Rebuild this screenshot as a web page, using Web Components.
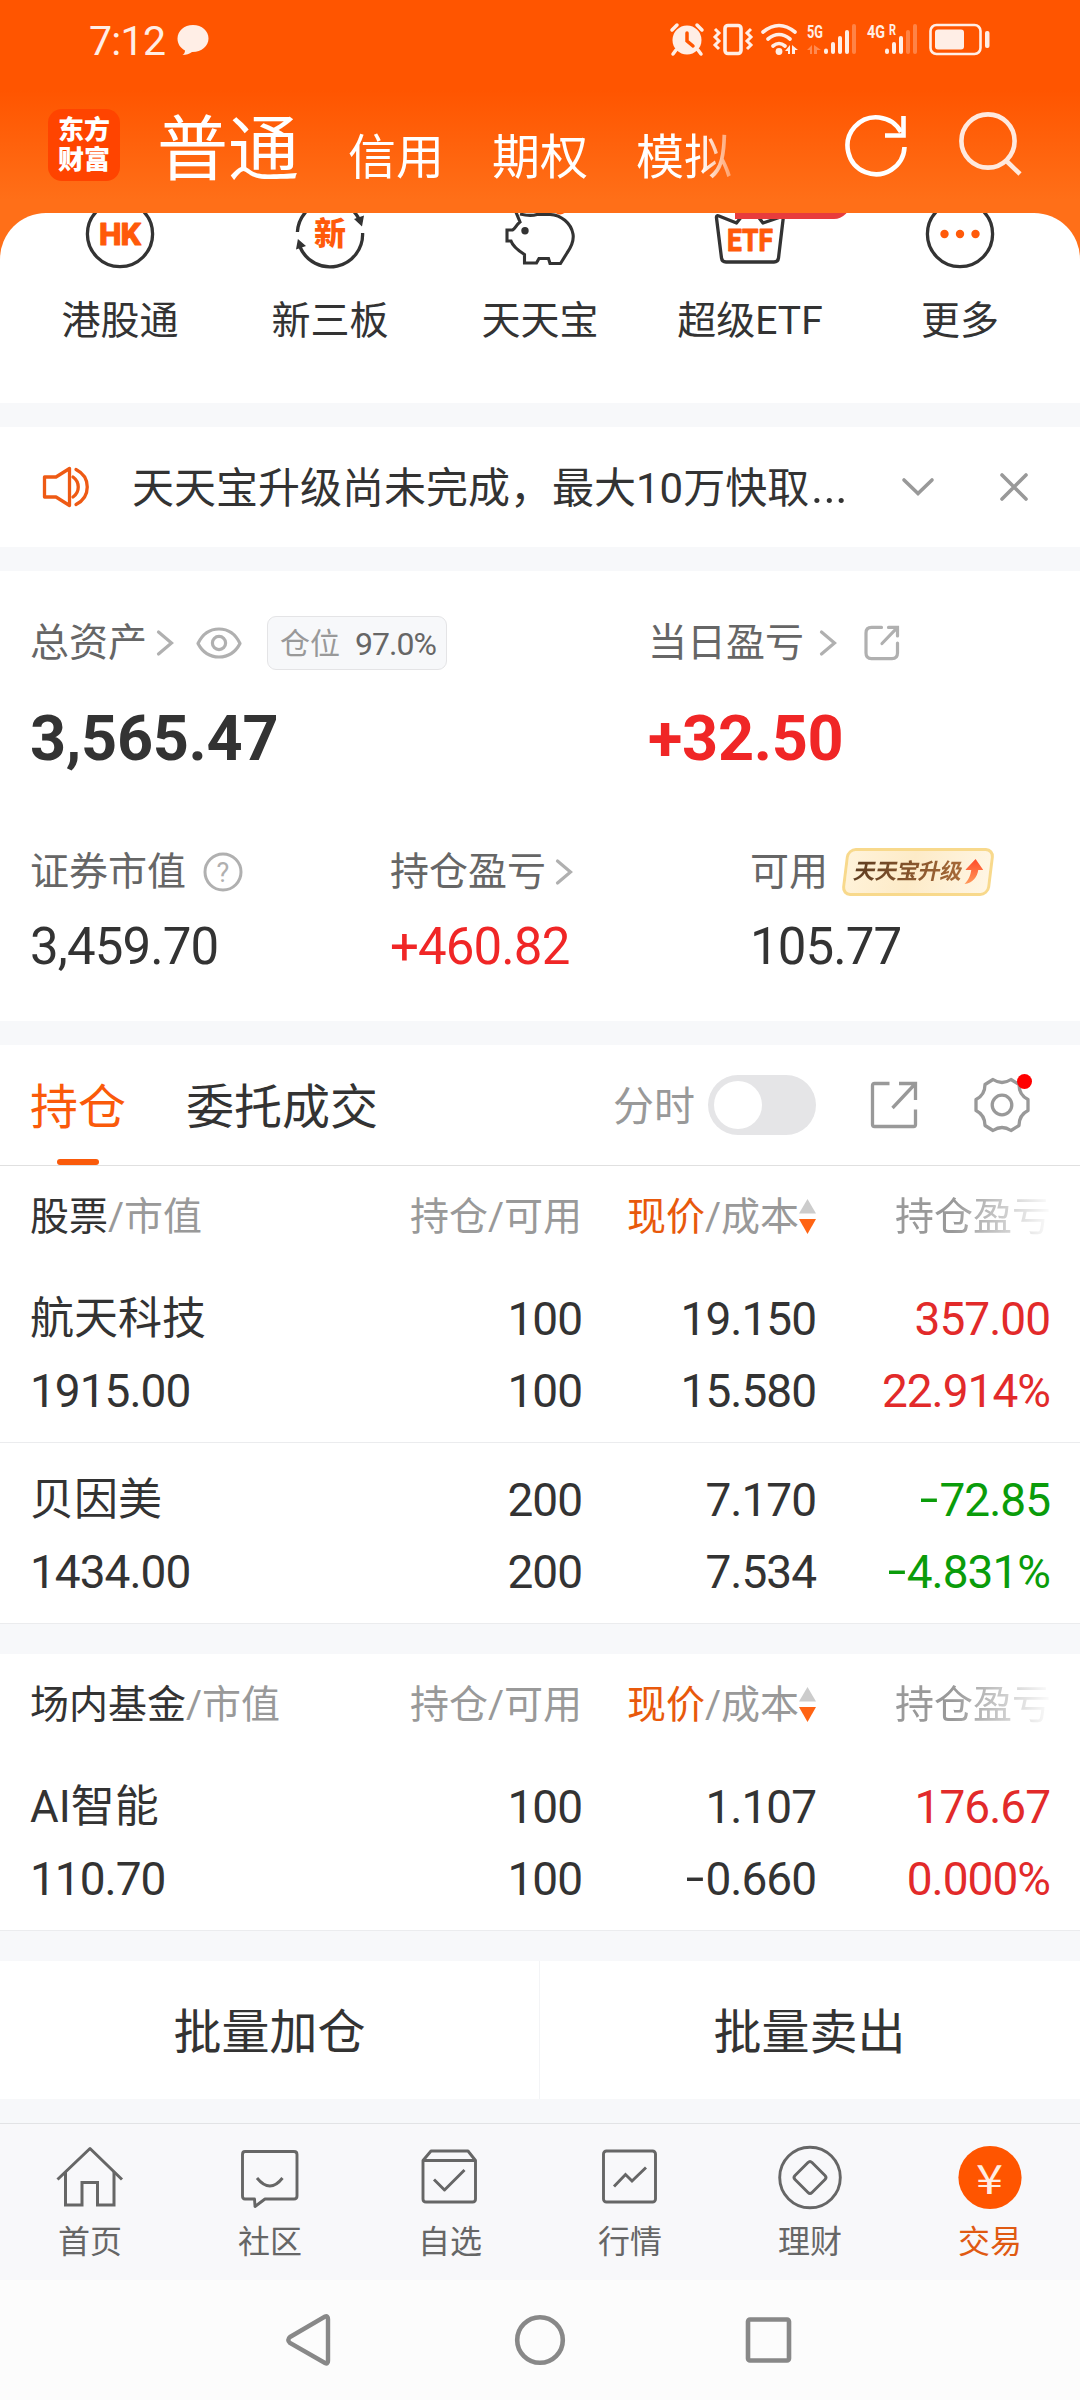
<!DOCTYPE html>
<html lang="zh-CN">
<head>
<meta charset="utf-8">
<title>交易</title>
<style>
  body {
    margin: 0;
    width: 1080px;
    background: #f7f8fa;
    color: #333;
    font-family: Roboto, "Noto Sans CJK SC", sans-serif;
  }
</style>
</head>
<body>
<trade-app></trade-app>

<script>
const icons = {
  refresh: { w: 66, h: 66, svg: `
    <g fill="none" stroke="#fff" stroke-width="4.600">
      <path d="M60.500 35A28.500 28.500 0 1 1 57 20"/>
      <path d="M59.500 4V23.500H41"/>
    </g>` },
  search: { w: 66, h: 66, svg: `
    <g fill="none" stroke="#ffe9de" stroke-width="4.600">
      <circle cx="30" cy="29" r="26.600"/><path d="M48.500 49L62 62"/>
    </g>` },
  hk: { w: 72, h: 72, svg: `
    <circle cx="36" cy="36" r="32.600" fill="none" stroke="#333" stroke-width="3.300"/>
    <text x="36" y="47" font-size="32" font-weight="800" fill="#ff5a0a" stroke="#ff5a0a" stroke-width="1" stroke-linejoin="round" text-anchor="middle" textLength="42">HK</text>` },
  xin: { w: 72, h: 72, svg: `
    <g fill="none" stroke="#333" stroke-width="3.300">
      <path d="M3.400 34A32.600 32.600 0 0 1 65 21"/>
      <path d="M68.600 35A32.600 32.600 0 0 1 6 49"/>
    </g>
    <path d="M60 21L70 17.500L68 28.500ZM2 51.500L3.900 41L12 48Z" fill="#333"/>
    <text x="36" y="47" font-size="32" font-weight="900" fill="#ff5a0a" text-anchor="middle">新</text>` },
  pig: { w: 72, h: 72, svg: `
    <circle cx="56" cy="9" r="7.500" fill="#ff5a0a"/>
    <path d="M11.500 13L16 24C12 27 11 31 8.500 32H3V43H7C9 49 15 53 20.500 56.500V65H32.500L35 60.500H44.500L46 65.500H56.500L63 55C68 48 70 42 69 36C67 25 57 17 46 16.500H33C28 18 20 17 16 16" fill="#fff" stroke="#333" stroke-width="3.100"/>
    <circle cx="21" cy="32.700" r="3.700" fill="#333"/>` },
  etf: { w: 72, h: 72, svg: `
    <path d="M2.500 20L7.500 60Q8 64 12 64H60Q64 64 64.500 60L69.500 18L49 25L36 8L22.500 25L5 18Q2 17 2.500 20Z" fill="none" stroke="#333" stroke-width="3.300" stroke-linejoin="round"/>
    <text x="36" y="53" font-size="32" font-weight="800" fill="#ff5a0a" stroke="#ff5a0a" stroke-width=".8" stroke-linejoin="round" text-anchor="middle" textLength="46" lengthAdjust="spacingAndGlyphs">ETF</text>` },
  more: { w: 72, h: 72, svg: `
    <circle cx="36" cy="36" r="32.600" fill="none" stroke="#333" stroke-width="3.300"/>
    <g fill="#ff5a0a"><circle cx="20.500" cy="36" r="4.200"/><circle cx="36" cy="36" r="4.200"/><circle cx="51.500" cy="36" r="4.200"/></g>` },
  speaker: { w: 48, h: 44, svg: `
    <g fill="none" stroke="#ee5a14" stroke-width="3.300" stroke-linejoin="round" stroke-linecap="round">
      <path d="M2.500 12H14L27.500 3.500V40.500L14 32H2.500Z"/>
      <path d="M31 12C38 17 38 27 31 32M34 4.500C49 12 49 32 34 39.500"/>
    </g>` },
  down: { w: 34, h: 22, svg: `<path d="M3 4L17 17.500L31 4" fill="none" stroke="#999" stroke-width="3.600" stroke-linecap="round"/>` },
  close: { w: 30, h: 30, svg: `<path d="M3 3L27 27M27 3L3 27" fill="none" stroke="#999" stroke-width="3.600" stroke-linecap="round"/>` },
  right: { w: 18, h: 28, svg: `<path d="M2.500 3L15.500 14L2.500 25" fill="none" stroke="#b0b0b0" stroke-width="3.200" stroke-linecap="round"/>` },
  eye: { w: 46, h: 32, svg: `
    <g fill="none" stroke="#b0b0b0" stroke-width="3.200">
      <path d="M2 16.500C7 6 14 2 23 2S39 6 44 16.500C39 26 32 30 23 30S7 26 2 16.500Z" stroke-linejoin="round"/>
      <circle cx="23" cy="16" r="6.600"/>
    </g>` },
  share: { w: 36, h: 36, svg: `
    <g fill="none" stroke="#b0b0b0" stroke-width="3.200" stroke-linecap="round">
      <path d="M17.500 2.400H7.500Q2 2.400 2 8V28Q2 33.600 7.500 33.600H28Q33.500 33.600 33.500 28V18"/>
      <path d="M24.500 2.400H33.500V11M33.500 2.400L18 18.500"/>
    </g>` },
  shareBig: { w: 48, h: 48, svg: `
    <g fill="none" stroke="#999" stroke-width="3.300">
      <path d="M19.500 2.500H4.500Q2.500 2.500 2.500 4.500V43.500Q2.500 45.500 4.500 45.500H43.500Q45.500 45.500 45.500 43.500V28.500"/>
      <path d="M29 2.500H45.500V19M45.500 2.500L22.500 27"/>
    </g>` },
  help: { w: 40, h: 40, svg: `
    <circle cx="20" cy="20" r="18" fill="none" stroke="#b0b0b0" stroke-width="3"/>
    <text x="20" y="29.500" font-size="27" fill="#b0b0b0" text-anchor="middle">?</text>` },
  gear: { w: 56, h: 56, svg: `
    <g fill="none" stroke="#999" stroke-width="3.300" stroke-linejoin="round">
      <path d="M19 2.500Q28 8.500 37 2.500L45 7.500Q45 18 54 22.500V33.500Q45 38 45 48.500L37 53.500Q28 47.500 19 53.500L11 48.500Q11 38 2 33.500V22.500Q11 18 11 7.500Z"/>
      <circle cx="28" cy="28" r="9.800"/>
    </g>` },
  sort: { w: 17, h: 36, svg: `<path d="M8.500 0L17 14.500H0Z" fill="#ccc"/><path d="M0 20H17L8.500 35Z" fill="#ff6414"/>` },
  home: { w: 72, h: 72, svg: `
    <g fill="none" stroke="#666" stroke-width="3">
      <path d="M3.500 38.500L36 7.500L68 38.500" stroke-linejoin="round"/>
      <path d="M11.500 31V64H28V41.500H43.500V64H60V31"/>
    </g>` },
  chat: { w: 72, h: 72, svg: `
    <g fill="none" stroke="#666" stroke-width="2.900" stroke-linejoin="round">
      <path d="M11 10.500H60Q63 10.500 63 13.500V55Q63 58 60 58H31L21 65.500L20.500 58H11Q8.500 58 8.500 55V13.500Q8.500 10.500 11 10.500Z"/>
      <path d="M23 37Q36 53 48.500 37"/>
    </g>` },
  check: { w: 72, h: 72, svg: `
    <g fill="none" stroke="#666" stroke-width="2.900" stroke-linejoin="round">
      <path d="M9 19.500L17 10H54L61.500 19.500V58Q61.500 61 58.500 61H12Q9 61 9 58ZM9 19.500H61.500"/>
      <path d="M20 38.500L30.500 49L50.500 29"/>
    </g>` },
  chart: { w: 72, h: 72, svg: `
    <g fill="none" stroke="#666" stroke-width="2.900">
      <rect x="9.500" y="10" width="52" height="51" rx="3"/><path d="M20 45.500L31.500 33.500L38 40L52 26.500"/>
    </g>` },
  money: { w: 72, h: 72, svg: `
    <g fill="none" stroke="#666" stroke-width="2.900">
      <circle cx="36" cy="36.500" r="30.300"/>
      <path d="M34 21.500Q36 19.500 38 21.500L51 34.500Q53 36.500 51 38.500L38 51.500Q36 53.500 34 51.500L21 38.500Q19 36.500 21 34.500Z"/>
    </g>` },
  trade: { w: 72, h: 72, svg: `
    <circle cx="36" cy="36.500" r="31.600" fill="#ff5500"/>
    <text x="35.500" y="53" font-size="41" font-family="Noto Sans CJK SC" fill="#ffeee4" text-anchor="middle" textLength="27" lengthAdjust="spacingAndGlyphs">¥</text>` },
  back: { w: 56, h: 56, svg: `<path d="M7 25L42 4.500Q45 3.500 45 7V49Q45 52.500 42 51L7 31Q3.500 28 7 25Z" fill="none" stroke="#888" stroke-width="4.400"/>` },
  circle: { w: 56, h: 56, svg: `<circle cx="28" cy="28" r="22.800" fill="none" stroke="#888" stroke-width="4.600"/>` },
  square: { w: 56, h: 56, svg: `<rect x="7" y="7.500" width="41" height="41" rx="2" fill="none" stroke="#888" stroke-width="4.600"/>` },
  bubble: { w: 32, h: 32, svg: `<path d="M16 1C7 1 .5 7 .5 14.500C.5 20 3.500 24 8 26.500C8 28.500 7 30 5.500 31C9 31 12.500 30 15 28C24.500 28.200 31.500 22 31.500 14.500S25 1 16 1Z" fill="#ffeee6"/>` },
  // alarm, vibrate, wifi, two SIM signals and battery share one strip
  system: { w: 326, h: 40, svg: `
    <g fill="#ffeee6">
      <circle cx="19" cy="20" r="14.500"/>
      <path d="M8 30L5 34M30 30L33 34M4 10L9 5M34 10L29 5" stroke="#ffeee6" stroke-width="3.500" stroke-linecap="round"/>
      <path d="M19 13V21L25 26" fill="none" stroke="#ff5500" stroke-width="3.500" stroke-linecap="round"/>
      <rect x="57" y="5.500" width="16" height="28" rx="3" fill="none" stroke="#ffeee6" stroke-width="3.600"/>
      <path d="M47 9L51 13L47 17L51 21L47 25L51 29M83 9L79 13L83 17L79 21L83 25L79 29" fill="none" stroke="#ffeee6" stroke-width="3"/>
      <path d="M95 12Q111 -1 127 12M100 19Q111 10 122 19M105 26Q111 21 117 26" fill="none" stroke="#ffeee6" stroke-width="3.600" stroke-linecap="round"/>
      <circle cx="111" cy="31.500" r="3.400"/>
      <path d="M117 31L122 25V34H120V31ZM124 25L130 30H127V34H124Z"/>
      <text x="139" y="17.500" font-size="18" font-weight="700" textLength="16" lengthAdjust="spacingAndGlyphs">5G</text>
      <path d="M139 30L144 25V34H142V30ZM146 25L153 30H149V34H146Z" opacity=".35"/>
      <rect x="156" y="28.500" width="4" height="5.500" rx="2"/>
      <rect x="163" y="22" width="4" height="12" rx="2"/>
      <rect x="170" y="16" width="4" height="18" rx="2"/>
      <rect x="177" y="10" width="4" height="24" rx="2"/>
      <rect x="184" y="4" width="4" height="30" rx="2" opacity=".3"/>
      <text x="199" y="17.500" font-size="18" font-weight="700" textLength="18" lengthAdjust="spacingAndGlyphs">4G</text>
      <text x="221" y="14.500" font-size="15" font-weight="700" textLength="7" lengthAdjust="spacingAndGlyphs">R</text>
      <rect x="217" y="28.500" width="4" height="5.500" rx="2"/>
      <rect x="224" y="22" width="4" height="12" rx="2"/>
      <rect x="231" y="16" width="4" height="18" rx="2"/>
      <rect x="238" y="10" width="4" height="24" rx="2" opacity=".3"/>
      <rect x="245" y="4" width="4" height="30" rx="2" opacity=".3"/>
      <rect x="262.500" y="5" width="50" height="29" rx="6" fill="none" stroke="#ffeee6" stroke-width="2.600"/>
      <rect x="267" y="9.500" width="29" height="20" rx="3"/>
      <rect x="317" y="11" width="4.500" height="17" rx="2"/>
    </g>` },
};

class UiIcon extends HTMLElement {
  constructor() {
    super();
    this.attachShadow({ mode: 'open' });
  }

  connectedCallback() {
    const icon = icons[this.getAttribute('name')];
    this.shadowRoot.innerHTML = `
      <style>
        :host { display: block; flex: none; width: ${icon.w}px; height: ${icon.h}px; }
        svg { display: block; }
      </style>
      <svg width="${icon.w}" height="${icon.h}" viewBox="0 0 ${icon.w} ${icon.h}">${icon.svg}</svg>`;
  }
}
customElements.define('ui-icon', UiIcon);

// Registers an element whose shadow root is cloned from static markup.
function defineView(tag, html) {
  const template = document.createElement('template');
  template.innerHTML = html;
  customElements.define(tag, class extends HTMLElement {
    constructor() {
      super();
      this.attachShadow({ mode: 'open' }).appendChild(template.content.cloneNode(true));
    }
  });
}

defineView('status-bar', `
<style>
  :host { display: flex; align-items: center; height: 80px; padding: 0 86px 0 89px; box-sizing: border-box; color: #ffeee6; }
  .time { font-size: 41px; line-height: 80px; letter-spacing: -.7px; margin-right: 12px; padding-top: 1px; }
  .system { margin-left: auto; }
</style>
<span class="time">7:12</span>
<ui-icon name="bubble"></ui-icon>
<ui-icon class="system" name="system"></ui-icon>
`);

defineView('app-header', `
<style>
  :host { display: block; height: 213px; background: linear-gradient(#ff5500 0, #ff5500 90px, #ff6f18 200px); color: #fff; }
  .bar { display: flex; align-items: center; height: 130px; padding: 0 56px 0 48px; }
  .logo { width: 72px; height: 72px; border-radius: 14px; background: #ff4400; display: flex; flex-direction: column; align-items: center; justify-content: center; font-size: 26px; line-height: 30px; font-weight: 900; }
  .modes { display: flex; align-items: baseline; gap: 48px; width: 586px; margin-left: 37px; padding-top: 17px; font-size: 48px; line-height: 90px; -webkit-mask-image: linear-gradient(90deg, #000 544px, transparent 592px); mask-image: linear-gradient(90deg, #000 544px, transparent 592px); }
  .modes b { font-size: 71px; font-weight: 400; margin-right: 1px; }
  .tools { display: flex; gap: 48px; margin-left: auto; }
</style>
<status-bar></status-bar>
<div class="bar">
  <div class="logo"><span>东方</span><span>财富</span></div>
  <div class="modes"><b>普通</b><span>信用</span><span>期权</span><span>模拟</span></div>
  <div class="tools"><ui-icon name="refresh"></ui-icon><ui-icon name="search"></ui-icon></div>
</div>
`);

class QuickEntry extends HTMLElement {
  constructor() {
    super();
    this.attachShadow({ mode: 'open' });
  }

  connectedCallback() {
    this.shadowRoot.innerHTML = `
      <style>
        :host { display: flex; flex-direction: column; align-items: center; position: relative; }
        ui-icon { margin-top: -15px; }
        .label { font-size: 39px; line-height: 60px; margin-top: 21px; }
        .badge { position: absolute; top: -24px; left: 90px; width: 115px; height: 30px; border-radius: 14px 14px 16px 0; background: #e83c3c; }
      </style>
      <ui-icon name="${this.getAttribute('icon')}"></ui-icon>
      ${this.hasAttribute('badge') ? '<i class="badge"></i>' : ''}
      <span class="label"><slot></slot></span>`;
  }
}
customElements.define('quick-entry', QuickEntry);

defineView('quick-entries', `
<style>
  :host { display: block; height: 190px; background: #ff6f18; }
  .sheet { display: grid; grid-template-columns: repeat(5, 210px); height: 190px; padding: 0 15px; border-radius: 46px 46px 0 0; background: #fff; overflow: hidden; }
</style>
<div class="sheet">
  <quick-entry icon="hk">港股通</quick-entry>
  <quick-entry icon="xin">新三板</quick-entry>
  <quick-entry icon="pig">天天宝</quick-entry>
  <quick-entry icon="etf" badge>超级ETF</quick-entry>
  <quick-entry icon="more">更多</quick-entry>
</div>
`);

defineView('notice-bar', `
<style>
  :host { display: flex; align-items: center; height: 120px; padding: 0 51px 0 42px; background: #fff; }
  .text { flex: 1; margin-left: 42px; font-size: 42px; line-height: 60px; padding-top: 4px; white-space: nowrap; }
  .dots { font-size: 62px; line-height: 1px; font-weight: 300; }
  .close { margin-left: 64px; }
</style>
<ui-icon name="speaker"></ui-icon>
<span class="text"><slot></slot><span class="dots">…</span></span>
<ui-icon name="down"></ui-icon>
<ui-icon class="close" name="close"></ui-icon>
`);

defineView('upgrade-tag', `
<style>
  :host { display: block; width: 148px; height: 48px; margin-left: 16px; }
  .box { display: flex; align-items: center; box-sizing: border-box; height: 48px; border: 3px solid #f8d98c; border-radius: 9px; background: linear-gradient(100deg, #fff3da, #fdebc8 45%, #fff6e4); transform: skewX(-7deg); padding-left: 7px; }
  .text { font-size: 22px; line-height: 42px; font-weight: 700; letter-spacing: -.4px; transform: skewX(-5deg); background: linear-gradient(90deg, #5f3d20, #a86a38); -webkit-background-clip: text; background-clip: text; color: transparent; }
  svg { margin-left: 3px; }
</style>
<div class="box">
  <span class="text"><slot></slot></span>
  <svg width="18" height="26" viewBox="0 0 18 26">
    <defs><linearGradient id="g" x2="0" y2="1"><stop stop-color="#ff4a2a"/><stop offset="1" stop-color="#ff9a5a"/></linearGradient></defs>
    <path d="M9 0L18 11H13C13 18 9 24 1 25C5 20 6 16 6 11H0Z" fill="url(#g)"/>
  </svg>
</div>
`);

defineView('asset-panel', `
<style>
  :host { display: block; height: 450px; box-sizing: border-box; padding: 42px 0 0 30px; background: #fff; }
  .total { display: grid; grid-template-columns: 618px 1fr; }
  .detail { display: grid; grid-template-columns: 360px 360px 1fr; margin-top: 63px; }
  .label { display: flex; align-items: center; height: 60px; font-size: 39px; line-height: 60px; color: #666; }
  .sum { font-size: 63px; line-height: 80px; font-weight: 700; margin-top: 26px; letter-spacing: -.3px; }
  .value { font-size: 51px; line-height: 60px; margin-top: 15px; letter-spacing: -.9px; }
  .up { color: #f02626; }
  .chip { display: flex; gap: 15px; box-sizing: border-box; width: 180px; height: 54px; margin-left: 25px; padding: 0 0 0 12px; border: 1px solid #e4e4e6; border-radius: 9px; background: #f7f8fa; font-size: 30px; line-height: 54px; color: #999; }
  .chip b { font-weight: 400; font-size: 32px; letter-spacing: -1px; color: #666; }
</style>
<div class="total">
  <div>
    <div class="label">总资产<ui-icon name="right" style="margin-left:9px"></ui-icon><ui-icon name="eye" style="margin-left:22px"></ui-icon>
      <span class="chip"><span>仓位</span><b>97.0%</b></span></div>
    <div class="sum">3,565.47</div>
  </div>
  <div>
    <div class="label">当日盈亏<ui-icon name="right" style="margin-left:15px"></ui-icon><ui-icon name="share" style="margin-left:27px"></ui-icon></div>
    <div class="sum up">+32.50</div>
  </div>
</div>
<div class="detail">
  <div>
    <div class="label">证券市值<ui-icon name="help" style="margin-left:17px"></ui-icon></div>
    <div class="value">3,459.70</div>
  </div>
  <div>
    <div class="label">持仓盈亏<ui-icon name="right" style="margin-left:9px"></ui-icon></div>
    <div class="value up">+460.82</div>
  </div>
  <div>
    <div class="label">可用<upgrade-tag>天天宝升级</upgrade-tag></div>
    <div class="value">105.77</div>
  </div>
</div>
`);

defineView('holding-tabs', `
<style>
  :host { display: flex; align-items: center; height: 120px; padding: 0 50px 0 30px; background: #fff; border-bottom: 1px solid #e0e0e0; }
  .tab { position: relative; font-size: 48px; line-height: 120px; margin-right: 60px; padding-top: 3px; height: 117px; }
  .active { color: #fa5a0a; }
  .active::after { content: ""; position: absolute; left: 27px; bottom: 0; width: 42px; height: 6px; border-radius: 3px; background: #fa5a0a; }
  .chart { margin-left: auto; font-size: 41px; line-height: 60px; padding-top: 3px; color: #999; }
  .toggle { box-sizing: border-box; width: 108px; height: 60px; margin: 0 54px 0 13px; padding: 6px; border-radius: 30px; background: #e5e5e7; }
  .toggle i { display: block; width: 48px; height: 48px; border-radius: 50%; background: #fff; }
  .settings { position: relative; margin-left: 56px; }
  .settings i { position: absolute; left: 43px; top: -3px; width: 15px; height: 15px; border-radius: 50%; background: #f00; }
</style>
<span class="tab active">持仓</span>
<span class="tab">委托成交</span>
<span class="chart">分时</span>
<span class="toggle"><i></i></span>
<ui-icon name="shareBig"></ui-icon>
<span class="settings"><ui-icon name="gear"></ui-icon><i></i></span>
`);

defineView('holding-head', `
<style>
  :host { display: grid; grid-template-columns: 319px 234px 234px 234px; height: 96px; padding: 0 31px 0 30px; background: #fff; font-size: 39px; line-height: 102px; color: #999; white-space: nowrap; }
  .kind { color: #333; }
  .right { text-align: right; margin-right: 1px; }
  .price { display: flex; justify-content: flex-end; }
  .price b { font-weight: 400; color: #e8590c; }
  .price ui-icon { margin: 33px 1px 0 0; }
  .profit { text-align: right; -webkit-mask-image: linear-gradient(90deg, #000 58%, transparent 101%); mask-image: linear-gradient(90deg, #000 58%, transparent 101%); }
</style>
<span><span class="kind"><slot></slot></span>/市值</span>
<span class="right">持仓/可用</span>
<span class="price"><span><b>现价</b>/成本</span><ui-icon name="sort"></ui-icon></span>
<span class="profit">持仓盈亏</span>
`);

class HoldingRow extends HTMLElement {
  constructor() {
    super();
    this.attachShadow({ mode: 'open' });
  }

  // the sign is drawn wider and a little higher than the font's hyphen
  number(name) {
    return this.getAttribute(name).replace('-', '<span class="minus">-</span>');
  }

  connectedCallback() {
    const color = this.getAttribute('trend') === 'down' ? '#0a9c0a' : '#e22a2a';
    this.shadowRoot.innerHTML = `
      <style>
        :host { display: grid; grid-template-columns: 318px 234px 234px 234px; grid-template-rows: 72px 72px; height: 159px; padding: 21px 32px 0 30px; background: #fff; border-bottom: 1px solid #ebecee; font-size: 46px; line-height: 73px; letter-spacing: -1px; }
        .name { font-size: 44px; letter-spacing: 0; }
        .num { text-align: right; }
        .profit { text-align: right; color: ${color}; }
        .minus { display: inline-block; width: 20px; text-align: center; letter-spacing: 0; transform: translateY(-2px) scaleX(1.45); line-height: 1; }
      </style>
      <span class="name">${this.getAttribute('name')}</span>
      <span class="num">${this.number('held')}</span>
      <span class="num">${this.number('price')}</span>
      <span class="profit">${this.number('profit')}</span>
      <span>${this.number('value')}</span>
      <span class="num">${this.number('usable')}</span>
      <span class="num">${this.number('cost')}</span>
      <span class="profit">${this.number('rate')}</span>`;
  }
}
customElements.define('holding-row', HoldingRow);

defineView('batch-actions', `
<style>
  :host { display: flex; height: 138px; background: #fff; font-size: 48px; line-height: 144px; }
  span { width: 539px; text-align: center; }
  i { width: 1px; height: 138px; background: #f3f4f6; }
</style>
<span>批量加仓</span><i></i><span>批量卖出</span>
`);

class TabItem extends HTMLElement {
  constructor() {
    super();
    this.attachShadow({ mode: 'open' });
  }

  connectedCallback() {
    this.shadowRoot.innerHTML = `
      <style>
        :host { display: flex; flex: 1; flex-direction: column; align-items: center; font-size: 32px; line-height: 48px; color: #666; }
        :host([active]) { color: #e05a12; }
        .label { margin-top: 5px; }
      </style>
      <ui-icon name="${this.getAttribute('icon')}"></ui-icon>
      <span class="label"><slot></slot></span>`;
  }
}
customElements.define('tab-item', TabItem);

defineView('tab-bar', `
<style>
  :host { display: flex; box-sizing: border-box; height: 157px; padding-top: 17px; border-top: 1px solid #e2e3e5; background: #f8f8fa; }
</style>
<tab-item icon="home">首页</tab-item>
<tab-item icon="chat">社区</tab-item>
<tab-item icon="check">自选</tab-item>
<tab-item icon="chart">行情</tab-item>
<tab-item icon="money">理财</tab-item>
<tab-item icon="trade" active>交易</tab-item>
`);

defineView('system-nav', `
<style>
  :host { display: flex; align-items: center; justify-content: center; gap: 173px; height: 120px; background: #fcfcfc; }
</style>
<ui-icon name="back"></ui-icon><ui-icon name="circle"></ui-icon><ui-icon name="square"></ui-icon>
`);

defineView('trade-app', `
<style>
  :host { display: flex; flex-direction: column; width: 1080px; height: 2400px; background: #f7f8fa; overflow: hidden; }
  notice-bar, asset-panel, holding-tabs, tab-bar { margin-top: 24px; }
  .funds, batch-actions { margin-top: 30px; }
</style>
<app-header></app-header>
<quick-entries></quick-entries>
<notice-bar>天天宝升级尚未完成，最大10万快取</notice-bar>
<asset-panel></asset-panel>
<holding-tabs></holding-tabs>
<holding-head>股票</holding-head>
<holding-row name="航天科技" value="1915.00" held="100" usable="100" price="19.150" cost="15.580" profit="357.00" rate="22.914%"></holding-row>
<holding-row name="贝因美" value="1434.00" held="200" usable="200" price="7.170" cost="7.534" profit="-72.85" rate="-4.831%" trend="down"></holding-row>
<holding-head class="funds">场内基金</holding-head>
<holding-row name="AI智能" value="110.70" held="100" usable="100" price="1.107" cost="-0.660" profit="176.67" rate="0.000%"></holding-row>
<batch-actions></batch-actions>
<tab-bar></tab-bar>
<system-nav></system-nav>
`);
</script>
</body>
</html>
